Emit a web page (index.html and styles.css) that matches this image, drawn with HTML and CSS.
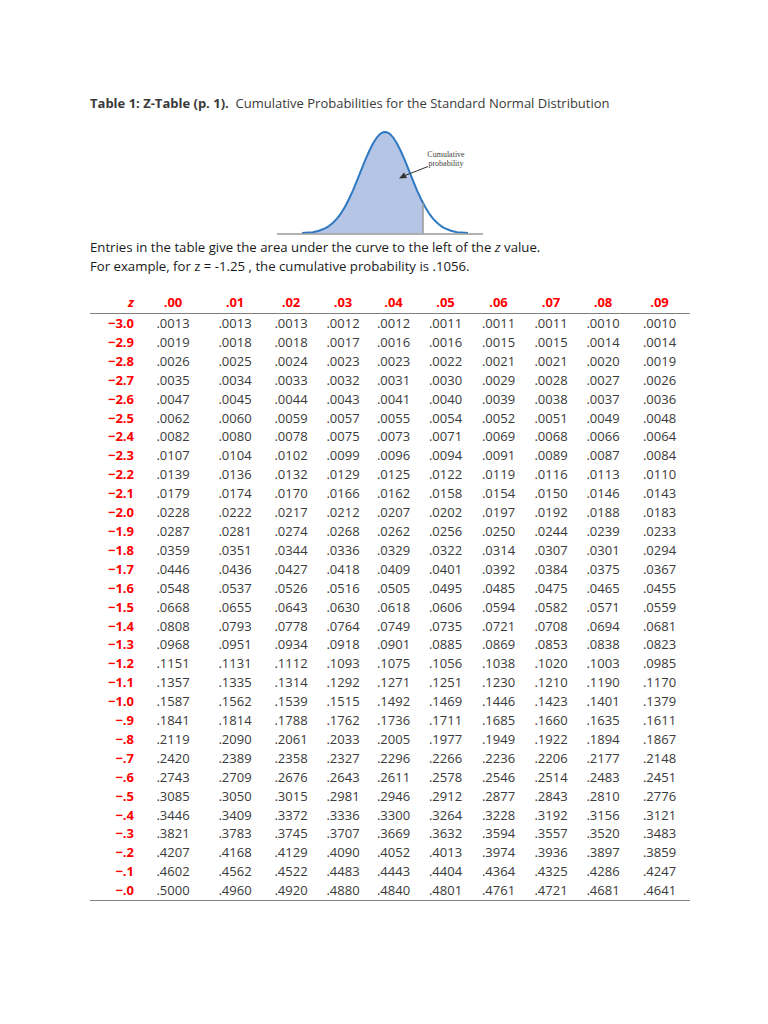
FILE: index.html
```html
<!DOCTYPE html>
<html lang="en">
<head>
    <meta charset="UTF-8">
    <meta name="viewport" content="width=device-width, initial-scale=1.0">
    <title>Z-Table</title>
    <link rel="stylesheet" href="styles.css">
</head>
<body>
    <div class="page">
        <!-- Titre -->
        <p class="title"><b>Table 1: Z-Table (p. 1).</b>&nbsp; Cumulative Probabilities for the Standard Normal Distribution</p>

        <!-- Courbe normale -->
        <svg class="curve" width="600" height="116" viewBox="90 120 600 116">
            <path class="area" d="M302,233 L305,232.8 L313,232.2 L319,230.8 L325,228.4 L329,226.1 L333,222.8 L337,218.6 L341,213.3 L345,206.7 L349,199 L353,190.3 L357,180.7 L361,170.7 L365,160.7 L369,151.5 L373,143.5 L377,137.3 L379,135.1 L381,133.3 L383,132.3 L385,132 L387,132.3 L389,133.3 L391,135.1 L393,137.3 L397,143.5 L401,151.5 L405,160.7 L409,170.7 L413,180.7 L417,190.3 L421,199 L423,203 L423,233.5 L302,233.5 Z"/>
            <path class="line" d="M302,233 L305,232.8 L313,232.2 L319,230.8 L325,228.4 L329,226.1 L333,222.8 L337,218.6 L341,213.3 L345,206.7 L349,199 L353,190.3 L357,180.7 L361,170.7 L365,160.7 L369,151.5 L373,143.5 L377,137.3 L379,135.1 L381,133.3 L383,132.3 L385,132 L387,132.3 L389,133.3 L391,135.1 L393,137.3 L397,143.5 L401,151.5 L405,160.7 L409,170.7 L413,180.7 L417,190.3 L421,199 L425,206.7 L429,213.3 L433,218.6 L437,222.8 L441,226.1 L445,228.4 L451,230.8 L457,232.2 L465,232.8 L468,233"/>
            <line class="axis" x1="277" y1="234" x2="483" y2="234"/>
            <line class="axis" x1="423" y1="203" x2="423" y2="233.5"/>
            <line class="arrow" x1="428" y1="166.5" x2="405" y2="175.5"/>
            <polygon class="arrowhead" points="399,178.5 404,172.5 407,178"/>
            <text class="label" x="446" y="157">Cumulative</text>
            <text class="label" x="446" y="166">probability</text>
        </svg>

        <!-- Explication -->
        <p class="intro">Entries in the table give the area under the curve to the left of the <i>z</i> value.<br>
        For example, for z = -1.25 , the cumulative probability is .1056.</p>

        <table class="ztable">
            <colgroup>
                <col class="c-z"><col class="c0"><col class="c1"><col class="c2"><col class="c3"><col class="c4">
                <col class="c5"><col class="c6"><col class="c7"><col class="c8"><col class="c9">
            </colgroup>
            <thead>
                <tr><th class="zh"><i>z</i></th><th>.00</th><th>.01</th><th>.02</th><th>.03</th><th>.04</th><th>.05</th><th>.06</th><th>.07</th><th>.08</th><th>.09</th></tr>
            </thead>
            <tbody>
                <tr><th>&minus;3.0</th><td>.0013</td><td>.0013</td><td>.0013</td><td>.0012</td><td>.0012</td><td>.0011</td><td>.0011</td><td>.0011</td><td>.0010</td><td>.0010</td></tr>
                <tr><th>&minus;2.9</th><td>.0019</td><td>.0018</td><td>.0018</td><td>.0017</td><td>.0016</td><td>.0016</td><td>.0015</td><td>.0015</td><td>.0014</td><td>.0014</td></tr>
                <tr><th>&minus;2.8</th><td>.0026</td><td>.0025</td><td>.0024</td><td>.0023</td><td>.0023</td><td>.0022</td><td>.0021</td><td>.0021</td><td>.0020</td><td>.0019</td></tr>
                <tr><th>&minus;2.7</th><td>.0035</td><td>.0034</td><td>.0033</td><td>.0032</td><td>.0031</td><td>.0030</td><td>.0029</td><td>.0028</td><td>.0027</td><td>.0026</td></tr>
                <tr><th>&minus;2.6</th><td>.0047</td><td>.0045</td><td>.0044</td><td>.0043</td><td>.0041</td><td>.0040</td><td>.0039</td><td>.0038</td><td>.0037</td><td>.0036</td></tr>
                <tr><th>&minus;2.5</th><td>.0062</td><td>.0060</td><td>.0059</td><td>.0057</td><td>.0055</td><td>.0054</td><td>.0052</td><td>.0051</td><td>.0049</td><td>.0048</td></tr>
                <tr><th>&minus;2.4</th><td>.0082</td><td>.0080</td><td>.0078</td><td>.0075</td><td>.0073</td><td>.0071</td><td>.0069</td><td>.0068</td><td>.0066</td><td>.0064</td></tr>
                <tr><th>&minus;2.3</th><td>.0107</td><td>.0104</td><td>.0102</td><td>.0099</td><td>.0096</td><td>.0094</td><td>.0091</td><td>.0089</td><td>.0087</td><td>.0084</td></tr>
                <tr><th>&minus;2.2</th><td>.0139</td><td>.0136</td><td>.0132</td><td>.0129</td><td>.0125</td><td>.0122</td><td>.0119</td><td>.0116</td><td>.0113</td><td>.0110</td></tr>
                <tr><th>&minus;2.1</th><td>.0179</td><td>.0174</td><td>.0170</td><td>.0166</td><td>.0162</td><td>.0158</td><td>.0154</td><td>.0150</td><td>.0146</td><td>.0143</td></tr>
                <tr><th>&minus;2.0</th><td>.0228</td><td>.0222</td><td>.0217</td><td>.0212</td><td>.0207</td><td>.0202</td><td>.0197</td><td>.0192</td><td>.0188</td><td>.0183</td></tr>
                <tr><th>&minus;1.9</th><td>.0287</td><td>.0281</td><td>.0274</td><td>.0268</td><td>.0262</td><td>.0256</td><td>.0250</td><td>.0244</td><td>.0239</td><td>.0233</td></tr>
                <tr><th>&minus;1.8</th><td>.0359</td><td>.0351</td><td>.0344</td><td>.0336</td><td>.0329</td><td>.0322</td><td>.0314</td><td>.0307</td><td>.0301</td><td>.0294</td></tr>
                <tr><th>&minus;1.7</th><td>.0446</td><td>.0436</td><td>.0427</td><td>.0418</td><td>.0409</td><td>.0401</td><td>.0392</td><td>.0384</td><td>.0375</td><td>.0367</td></tr>
                <tr><th>&minus;1.6</th><td>.0548</td><td>.0537</td><td>.0526</td><td>.0516</td><td>.0505</td><td>.0495</td><td>.0485</td><td>.0475</td><td>.0465</td><td>.0455</td></tr>
                <tr><th>&minus;1.5</th><td>.0668</td><td>.0655</td><td>.0643</td><td>.0630</td><td>.0618</td><td>.0606</td><td>.0594</td><td>.0582</td><td>.0571</td><td>.0559</td></tr>
                <tr><th>&minus;1.4</th><td>.0808</td><td>.0793</td><td>.0778</td><td>.0764</td><td>.0749</td><td>.0735</td><td>.0721</td><td>.0708</td><td>.0694</td><td>.0681</td></tr>
                <tr><th>&minus;1.3</th><td>.0968</td><td>.0951</td><td>.0934</td><td>.0918</td><td>.0901</td><td>.0885</td><td>.0869</td><td>.0853</td><td>.0838</td><td>.0823</td></tr>
                <tr><th>&minus;1.2</th><td>.1151</td><td>.1131</td><td>.1112</td><td>.1093</td><td>.1075</td><td>.1056</td><td>.1038</td><td>.1020</td><td>.1003</td><td>.0985</td></tr>
                <tr><th>&minus;1.1</th><td>.1357</td><td>.1335</td><td>.1314</td><td>.1292</td><td>.1271</td><td>.1251</td><td>.1230</td><td>.1210</td><td>.1190</td><td>.1170</td></tr>
                <tr><th>&minus;1.0</th><td>.1587</td><td>.1562</td><td>.1539</td><td>.1515</td><td>.1492</td><td>.1469</td><td>.1446</td><td>.1423</td><td>.1401</td><td>.1379</td></tr>
                <tr><th>&minus;.9</th><td>.1841</td><td>.1814</td><td>.1788</td><td>.1762</td><td>.1736</td><td>.1711</td><td>.1685</td><td>.1660</td><td>.1635</td><td>.1611</td></tr>
                <tr><th>&minus;.8</th><td>.2119</td><td>.2090</td><td>.2061</td><td>.2033</td><td>.2005</td><td>.1977</td><td>.1949</td><td>.1922</td><td>.1894</td><td>.1867</td></tr>
                <tr><th>&minus;.7</th><td>.2420</td><td>.2389</td><td>.2358</td><td>.2327</td><td>.2296</td><td>.2266</td><td>.2236</td><td>.2206</td><td>.2177</td><td>.2148</td></tr>
                <tr><th>&minus;.6</th><td>.2743</td><td>.2709</td><td>.2676</td><td>.2643</td><td>.2611</td><td>.2578</td><td>.2546</td><td>.2514</td><td>.2483</td><td>.2451</td></tr>
                <tr><th>&minus;.5</th><td>.3085</td><td>.3050</td><td>.3015</td><td>.2981</td><td>.2946</td><td>.2912</td><td>.2877</td><td>.2843</td><td>.2810</td><td>.2776</td></tr>
                <tr><th>&minus;.4</th><td>.3446</td><td>.3409</td><td>.3372</td><td>.3336</td><td>.3300</td><td>.3264</td><td>.3228</td><td>.3192</td><td>.3156</td><td>.3121</td></tr>
                <tr><th>&minus;.3</th><td>.3821</td><td>.3783</td><td>.3745</td><td>.3707</td><td>.3669</td><td>.3632</td><td>.3594</td><td>.3557</td><td>.3520</td><td>.3483</td></tr>
                <tr><th>&minus;.2</th><td>.4207</td><td>.4168</td><td>.4129</td><td>.4090</td><td>.4052</td><td>.4013</td><td>.3974</td><td>.3936</td><td>.3897</td><td>.3859</td></tr>
                <tr><th>&minus;.1</th><td>.4602</td><td>.4562</td><td>.4522</td><td>.4483</td><td>.4443</td><td>.4404</td><td>.4364</td><td>.4325</td><td>.4286</td><td>.4247</td></tr>
                <tr><th>&minus;.0</th><td>.5000</td><td>.4960</td><td>.4920</td><td>.4880</td><td>.4840</td><td>.4801</td><td>.4761</td><td>.4721</td><td>.4681</td><td>.4641</td></tr>
            </tbody>
        </table>
    </div>
</body>
</html>
```

FILE: styles.css
```css
body {
    margin: 0;
    padding: 0;
    background-color: #ffffff;
    font-family: "Open Sans", sans-serif;
    color: #3a3a3a;
}
.page {
    width: 600px;
    padding: 94px 0 60px 90px;
}
.title {
    margin: 0;
    font-size: 13px;
    line-height: 18px;
    white-space: nowrap;
}
.curve {
    display: block;
    margin-top: 8px;
}
.curve .area {
    fill: #b4c5e6;
    stroke: none;
}
.curve .line {
    fill: none;
    stroke: #2f78c2;
    stroke-width: 2;
    stroke-linejoin: round;
}
.curve .axis {
    stroke: #9a9a9a;
    stroke-width: 1.5;
}
.curve .arrow {
    stroke: #333333;
    stroke-width: 1;
}
.curve .arrowhead {
    fill: #333333;
}
.curve .label {
    font-family: "Liberation Serif", serif;
    font-size: 8px;
    fill: #444444;
    text-anchor: middle;
}
.intro {
    margin: 2px 0 0 0;
    font-size: 13.2px;
    line-height: 19px;
    color: #1a1a1a;
}
.ztable {
    margin-top: 15px;
    width: 600px;
    border-collapse: collapse;
    table-layout: fixed;
    font-size: 13px;
    border-bottom: 1.5px solid #7f7f7f;
}
.c-z { width: 50px; }
.c0 { width: 66px; }
.c1 { width: 58px; }
.c2 { width: 54px; }
.c3 { width: 50px; }
.c4 { width: 51px; }
.c5 { width: 53px; }
.c6 { width: 53px; }
.c7 { width: 52px; }
.c8 { width: 52px; }
.c9 { width: 61px; }
.ztable thead th {
    height: 22px;
    padding: 0;
    color: #ff0000;
    font-weight: bold;
    text-align: center;
    border-bottom: 1.5px solid #7f7f7f;
}
.ztable thead th.zh {
    text-align: right;
    padding-right: 6px;
}
.ztable tbody th {
    padding: 0 6px 0 0;
    text-align: right;
    color: #ff0000;
    font-weight: bold;
}
.ztable td {
    padding: 0;
    text-align: center;
}
.ztable tbody tr {
    height: 18.9px;
    line-height: 18.9px;
}
```
